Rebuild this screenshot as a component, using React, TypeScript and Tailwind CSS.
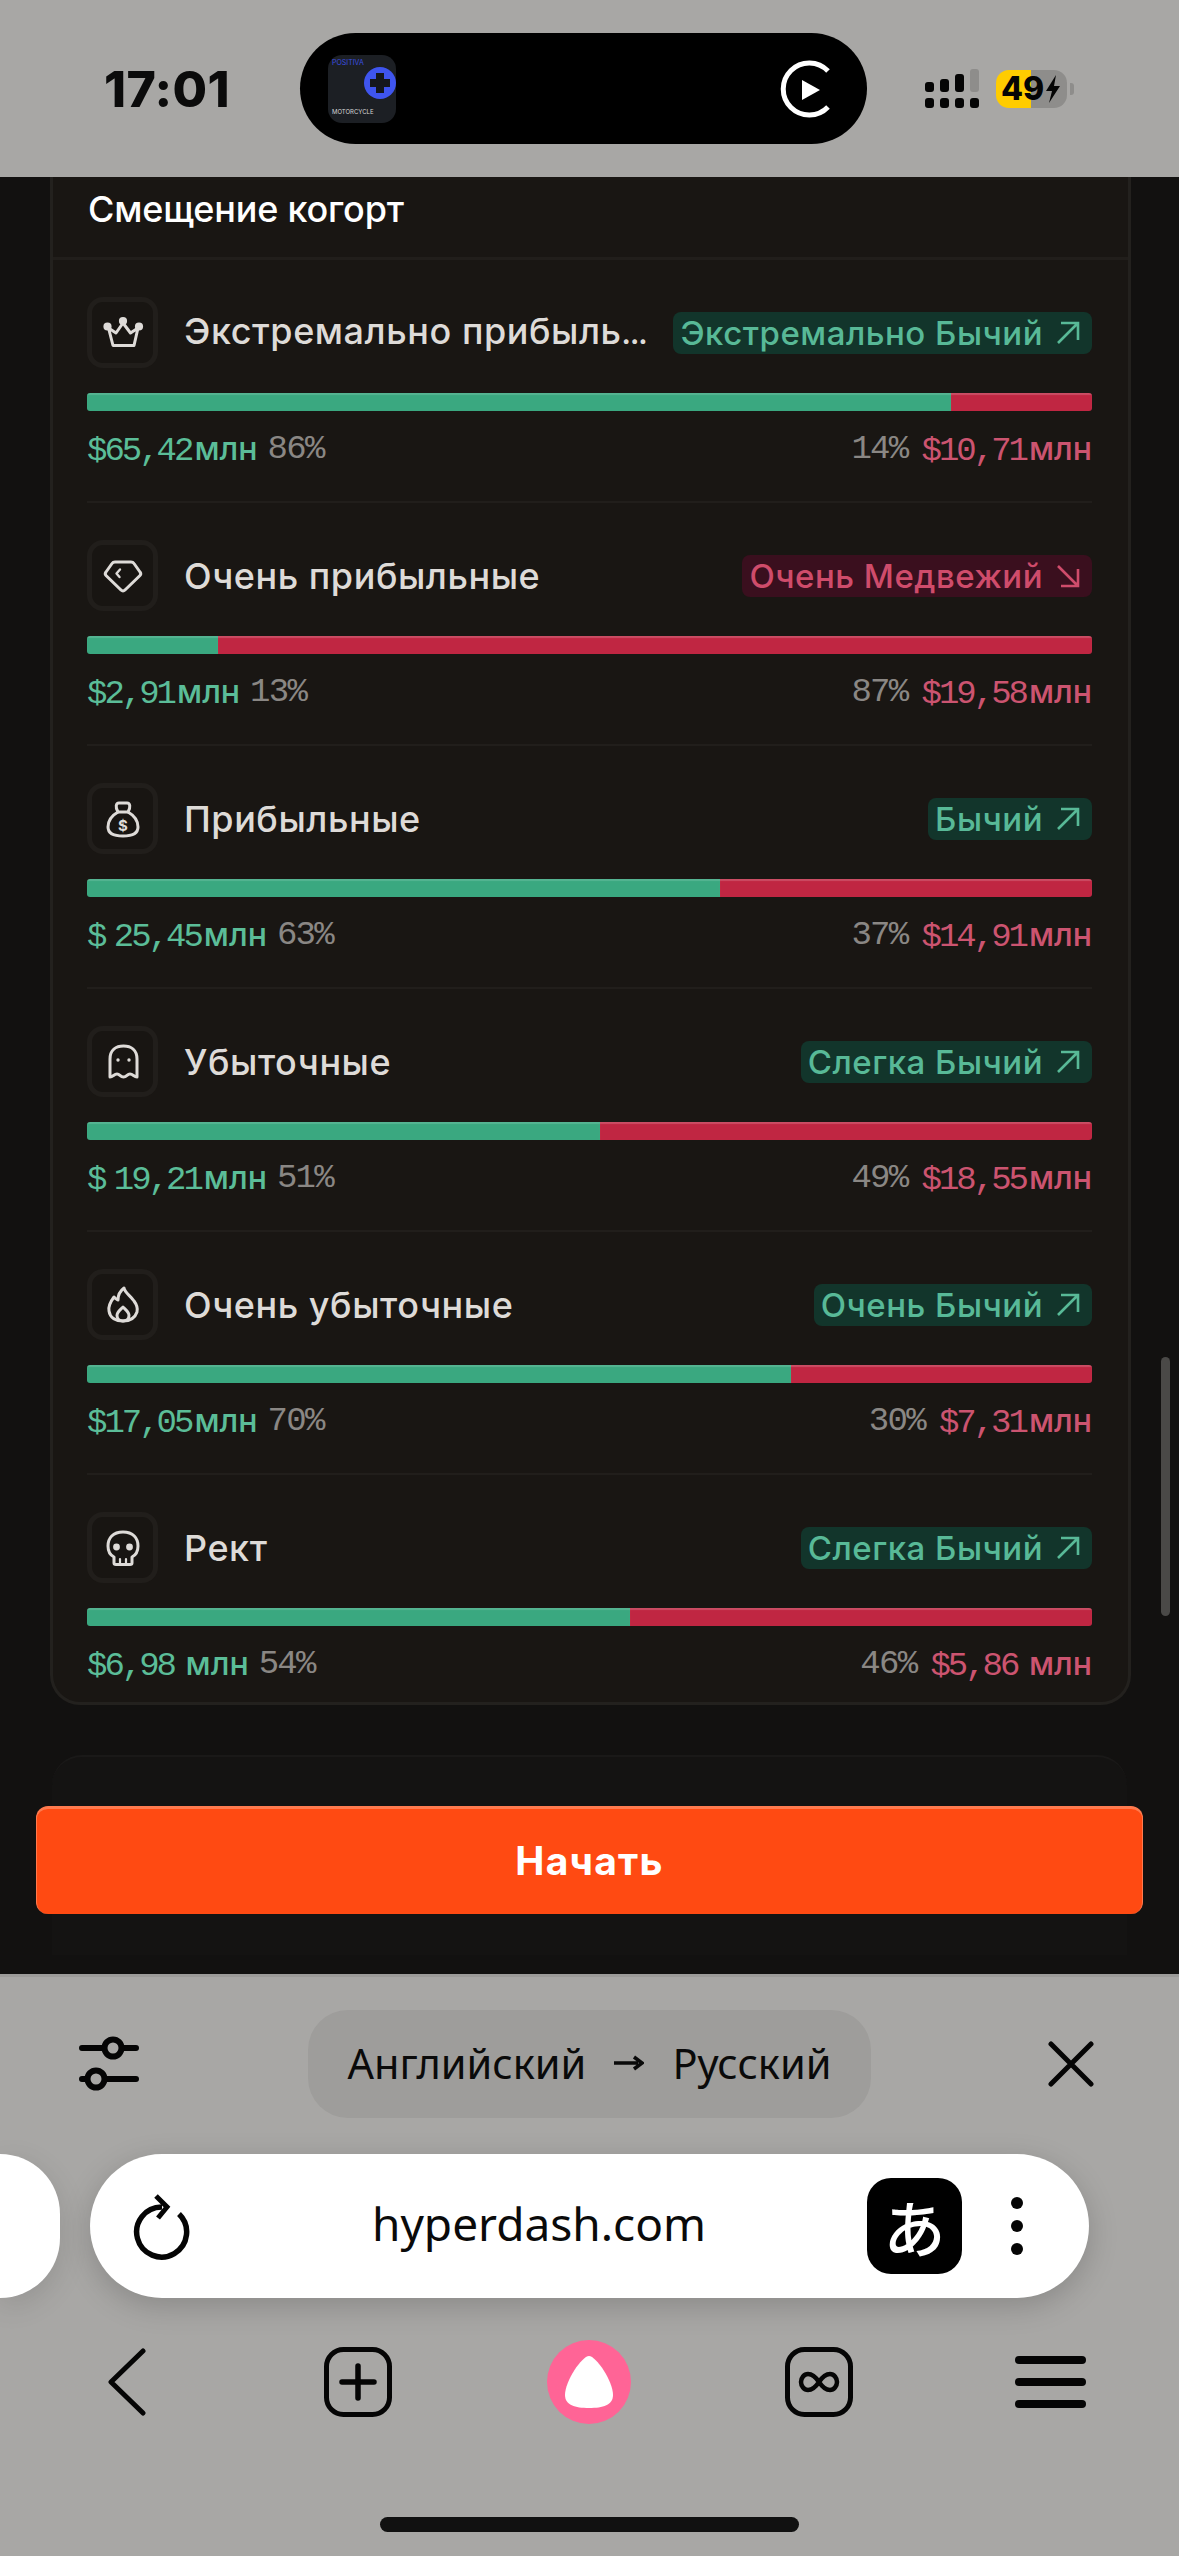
import React from "react";

type Row = {
  name: string;
  cut?: boolean;
  icon: React.ReactNode;
  badge: string;
  bull: boolean;
  buy: string;
  buyPct: number;
  sell: string;
  unit?: string;
};

const Crown = () => (
  <>
    <path d="M12 34.5 L7.5 17 L15 22 L22 12 L29.5 22 L37 17 L33 34.5 Z" />
    <circle cx="6.5" cy="15.5" r="2.6" fill="#dedbd8" />
    <circle cx="22" cy="10" r="2.6" fill="#dedbd8" />
    <circle cx="38" cy="15.5" r="2.6" fill="#dedbd8" />
  </>
);

const Diamond = () => (
  <>
    <path d="M14 8 H30 Q32 8 33 9.500 L39 18 Q40.500 20 39 21.500 L24 36 Q22 38 20 36 L5 21.500 Q3.500 20 5 18 L11 9.500 Q12 8 14 8 Z" />
    <path d="M19 15.500 L15.500 19.500 L18.500 23" strokeWidth="2.4" />
  </>
);

const Bag = () => (
  <>
    <path d="M17 15 C14 10 15 6 18 6 H26 C29 6 30 10 27 15 Z" />
    <path d="M17 15 C10 19 7 25 7 30 C7 36 12 39 22 39 C32 39 37 36 37 30 C37 25 34 19 27 15" />
    <text x="22" y="34" textAnchor="middle" fontSize="15" fontWeight="700" fill="#dedbd8" stroke="none" fontFamily="Inter, sans-serif">
      $
    </text>
  </>
);

const Ghost = () => (
  <>
    <path d="M9 37 V19 C9 10 15 6 22.5 6 C30 6 36 10 36 19 V37 C33 37 32 34 29 34 C26 34 26 37 22.5 37 C19 37 19 34 16 34 C13 34 12 37 9 37 Z" />
    <circle cx="17" cy="20" r="1.7" fill="#dedbd8" stroke="none" />
    <circle cx="28" cy="20" r="1.7" fill="#dedbd8" stroke="none" />
  </>
);

const Flame = () => (
  <>
    <path d="M23 5 C24 10 29 12 33 18 C36 22 37 25 36 29 C34 35 29 38 22 38 C15 38 9 35 8 28 C7 23 10 18 13 14 C15 16 16 17 17 17 C17 12 19 8 23 5 Z" />
    <path d="M22 24 C25 27 28 29 28 32.500 C28 36 25 38 22 38 C19 38 16 36 16 32.500 C16 29 19 27 22 24 Z" />
  </>
);

const Skull = () => (
  <>
    <path d="M22 6 C12 6 7 12 7 20 C7 26 9 29 13 31 V37 C13 38 14 38.500 15 38.500 H29 C30 38.500 31 38 31 37 V31 C35 29 37 26 37 20 C37 12 32 6 22 6 Z" />
    <path d="M19 33 V38 M25 33 V38" strokeWidth="2.2" />
    <circle cx="15.500" cy="21" r="3.400" fill="#dedbd8" stroke="none" />
    <circle cx="28.500" cy="21" r="3.400" fill="#dedbd8" stroke="none" />
  </>
);

const rows: Row[] = [
  { name: "Экстремально прибыль", cut: true, icon: <Crown />, badge: "Экстремально Бычий", bull: true, buy: "$65,42", buyPct: 86, sell: "$10,71" },
  { name: "Очень прибыльные", icon: <Diamond />, badge: "Очень Медвежий", bull: false, buy: "$2,91", buyPct: 13, sell: "$19,58" },
  { name: "Прибыльные", icon: <Bag />, badge: "Бычий", bull: true, buy: "$ 25,45", buyPct: 63, sell: "$14,91" },
  { name: "Убыточные", icon: <Ghost />, badge: "Слегка Бычий", bull: true, buy: "$ 19,21", buyPct: 51, sell: "$18,55" },
  { name: "Очень убыточные", icon: <Flame />, badge: "Очень Бычий", bull: true, buy: "$17,05", buyPct: 70, sell: "$7,31" },
  { name: "Рект", icon: <Skull />, badge: "Слегка Бычий", bull: true, buy: "$6,98", buyPct: 54, sell: "$5,86", unit: " млн" },
];

const Money = ({ value, unit }: { value: string; unit: string }) => (
  <span className="whitespace-pre">
    <span className="font-['Liberation_Mono',monospace] text-[34px] tracking-[-3px] [word-spacing:-8px]">{value}</span>
    <span className="ml-[3px] font-medium">{unit}</span>
  </span>
);

const Pct = ({ value }: { value: number }) => (
  <span className="text-[#8a8784] font-['Liberation_Mono',monospace] text-[34px] tracking-[-1.7px]">{value}%</span>
);

const CohortRow = ({ row, last }: { row: Row; last: boolean }) => (
  <div className={`ml-[37px] mr-[39px] pt-[37px] ${last ? "pb-[15px]" : "pb-[29px] border-b-2 border-[#211e1b]"}`}>
    <div className="flex items-center h-[71px]">
      <div className="w-[71px] h-[71px] shrink-0 flex items-center justify-center rounded-[16px] bg-[#181512] border-[5px] border-[#211e1b]">
        <svg width="44" height="44" viewBox="0 0 44 44" fill="none" stroke="#dedbd8" strokeWidth="3" strokeLinejoin="round" strokeLinecap="round">
          {row.icon}
        </svg>
      </div>
      <div className="flex-1 min-w-0 ml-[26px] mr-[20px] whitespace-nowrap text-[36px] leading-[44px] tracking-[0.55px] font-medium text-[#dedbd8]">
        {row.name}
        {row.cut && <span className="text-[28px] tracking-[-1px] font-bold">...</span>}
      </div>
      <div
        className={`shrink-0 flex items-center h-[42px] pt-[3px] pl-[7px] pr-[12px] rounded-[8px] text-[33px] tracking-[0.5px] font-medium ${
          row.bull ? "bg-[#12352b] text-[#58b997]" : "bg-[#3a0f1e] text-[#cf4c6b]"
        }`}
      >
        <span>{row.badge}</span>
        <svg className="ml-[13px] -mt-[3px]" width="24" height="24" viewBox="0 0 24 24" fill="none" stroke="currentColor" strokeWidth="2.6">
          {row.bull ? <path d="M2 22 L22 2 M5 2 H22 V19" /> : <path d="M2 2 L22 22 M5 22 H22 V5" />}
        </svg>
      </div>
    </div>
    <div className="flex h-[18px] mt-[25px] rounded-[3px] overflow-hidden">
      <div className="bg-[#3aa880] shadow-[inset_0_2px_1px_rgba(255,255,255,0.14)]" style={{ width: `${row.buyPct}%` }} />
      <div className="flex-1 bg-[#c02642] shadow-[inset_0_2px_1px_rgba(255,255,255,0.18)]" />
    </div>
    <div className="flex justify-between items-center h-[44px] mt-[17px] text-[32px] leading-[44px]">
      <div className="flex gap-[10px]">
        <span className="text-[#5bbd98]">
          <Money value={row.buy} unit={row.unit ?? "млн"} />
        </span>
        <Pct value={row.buyPct} />
      </div>
      <div className="flex gap-[14px]">
        <Pct value={100 - row.buyPct} />
        <span className="text-[#cc5470]">
          <Money value={row.sell} unit={row.unit ?? "млн"} />
        </span>
      </div>
    </div>
  </div>
);

const StatusBar = () => (
  <div className="h-[177px] shrink-0 flex items-center pl-[104px] bg-[#a8a7a5]">
    <div className="w-[196px] text-[50px] leading-none font-extrabold text-[#0b0b0b] tracking-[0.4px]">17:01</div>
    <div className="w-[567px] h-[111px] rounded-[56px] bg-black flex items-center justify-between pl-[28px] pr-[33px]">
      <div className="relative w-[68px] h-[68px] rounded-[14px] bg-[#1c1f24] overflow-hidden">
        <span className="absolute left-[4px] top-[4px] text-[7px] leading-none text-[#3b4fe0]">POSITIVA</span>
        <span className="absolute left-[4px] top-[54px] text-[6px] leading-none text-[#d5d5d5]">MOTORCYCLE</span>
        <svg className="absolute left-[36px] top-[12px]" width="32" height="32" viewBox="0 0 32 32">
          <circle cx="16" cy="16" r="16" fill="#3f55ee" />
          <path d="M12 6 H20 V12 H26 V20 H20 V26 H12 V20 H6 V12 H12 Z" fill="#15171c" />
        </svg>
      </div>
      <svg width="56" height="60" viewBox="0 0 56 60">
        <path d="M50 12 A26 26 0 1 0 50 48" fill="none" stroke="#fff" strokeWidth="5" />
        <path d="M24 21 L42 31 L24 41 Z" fill="#fff" />
      </svg>
    </div>
    <svg className="ml-[58px]" width="54" height="40" viewBox="0 0 54 40">
      <rect x="0" y="13" width="9" height="10" rx="3" fill="#050505" />
      <rect x="15" y="10" width="9" height="13" rx="3" fill="#050505" />
      <rect x="30" y="5" width="9" height="18" rx="3" fill="#050505" />
      <rect x="45" y="0" width="9" height="23" rx="3" fill="#8e8d8b" />
      <rect x="0" y="29" width="9" height="10" rx="3" fill="#050505" />
      <rect x="15" y="29" width="9" height="10" rx="3" fill="#050505" />
      <rect x="30" y="29" width="9" height="10" rx="3" fill="#050505" />
      <rect x="45" y="29" width="9" height="10" rx="3" fill="#050505" />
    </svg>
    <div className="ml-[17px] w-[71px] h-[38px] rounded-[13px] flex items-center pl-[5px] bg-[linear-gradient(90deg,#ffcc00_49%,#8e8d8b_49%)]">
      <span className="text-[32px] leading-none font-extrabold text-[#050505]">49</span>
      <svg width="16" height="28" viewBox="0 0 16 28" className="ml-[1px]">
        <path d="M11 0 L1 16 H7 L4 28 L15 11 H9 Z" fill="#050505" />
      </svg>
    </div>
    <div className="ml-[3px] w-[4px] h-[12px] rounded-r-[3px] bg-[#8e8d8b]" />
  </div>
);

const TranslateBar = () => (
  <div className="flex items-center justify-between h-[108px] pl-[79px] pr-[85px]">
    <svg width="60" height="56" viewBox="0 0 60 56" fill="none" stroke="#050505" strokeWidth="6" strokeLinecap="round">
      <path d="M3 12 H25 M43 12 H57 M3 43 H8 M26 43 H57" />
      <circle cx="34" cy="12" r="8.500" />
      <circle cx="17" cy="43" r="8.500" />
    </svg>
    <div className="w-[563px] h-[108px] mr-[8px] pb-[2px] rounded-[40px] bg-[#9e9d9b] flex items-center justify-center text-[41.5px] text-[#0a0a0a] font-['Noto_Sans',sans-serif]">
      <span>Английский</span>
      <svg className="mx-[28px]" width="30" height="16" viewBox="0 0 30 16">
        <path d="M0 8 H24 M20 2 L28 8 L20 14" fill="none" stroke="#0a0a0a" strokeWidth="3.500" />
      </svg>
      <span>Русский</span>
    </div>
    <svg width="46" height="46" viewBox="0 0 46 46" fill="none" stroke="#050505" strokeWidth="5" strokeLinecap="round">
      <path d="M3 3 L43 43 M43 3 L3 43" />
    </svg>
  </div>
);

const AddressBar = () => (
  <div className="flex gap-[30px] h-[144px] mt-[36px]">
    <div className="w-[60px] rounded-r-[72px] bg-white shadow-[0_8px_30px_rgba(0,0,0,0.12)]" />
    <div className="w-[999px] rounded-[72px] bg-white shadow-[0_8px_30px_rgba(0,0,0,0.18)] flex items-center pl-[41px] pr-[66px]">
      <svg className="shrink-0" width="60" height="68" viewBox="0 0 60 68" fill="none" stroke="#050505" strokeWidth="5.500">
        <path d="M31 15 A25 25 0 1 0 48 22" />
        <path d="M25 4 L36 15 L27 26" strokeWidth="5" />
      </svg>
      <div className="flex-1 pl-[20px] pb-[5px] text-center text-[46px] text-[#0a0a0a] font-['Noto_Sans',sans-serif]">hyperdash.com</div>
      <div className="w-[95px] h-[96px] shrink-0 rounded-[24px] bg-black flex items-center justify-center text-[62px] leading-none font-medium text-white font-['Noto_Sans_CJK_JP',sans-serif]">あ</div>
      <div className="ml-[49px] flex flex-col gap-[11px] shrink-0">
        <div className="w-[12px] h-[12px] rounded-full bg-[#050505]" />
        <div className="w-[12px] h-[12px] rounded-full bg-[#050505]" />
        <div className="w-[12px] h-[12px] rounded-full bg-[#050505]" />
      </div>
    </div>
  </div>
);

const NavBar = () => (
  <div className="flex items-center justify-between h-[84px] mt-[42px] pl-[77px] pr-[79px]">
    <div className="w-[100px] flex justify-center">
      <svg width="38" height="68" viewBox="0 0 38 68" fill="none" stroke="#050505" strokeWidth="5" strokeLinecap="round" strokeLinejoin="round">
        <path d="M35 3 L3 34 L35 65" />
      </svg>
    </div>
    <div className="w-[100px] flex justify-center">
      <svg width="68" height="70" viewBox="0 0 68 70" fill="none" stroke="#050505" strokeWidth="5">
        <rect x="2.500" y="2.500" width="63" height="65" rx="17" />
        <path d="M18 35 H50 M34 19 V51" strokeWidth="5.500" strokeLinecap="round" />
      </svg>
    </div>
    <div className="w-[100px] flex justify-center">
      <div className="w-[84px] h-[84px] rounded-full bg-[#ff6496] flex items-center justify-center">
        <svg width="48" height="52" viewBox="0 0 48 52">
          <path d="M24 0 C31 0 48 25 48 39 C48 49 38 52 24 52 C10 52 0 49 0 39 C0 25 17 0 24 0 Z" fill="#fff" />
        </svg>
      </div>
    </div>
    <div className="w-[100px] flex justify-center">
      <svg width="68" height="70" viewBox="0 0 68 70" fill="none" stroke="#050505" strokeWidth="5">
        <rect x="2.500" y="2.500" width="63" height="65" rx="17" />
        <path d="M34 35 C30 29 27 27 23 27 C19 27 16 31 16 35 C16 39 19 43 23 43 C27 43 30 41 34 35 C38 29 41 27 45 27 C49 27 52 31 52 35 C52 39 49 43 45 43 C41 43 38 41 34 35 Z" strokeWidth="4.500" />
      </svg>
    </div>
    <div className="w-[100px] flex flex-col items-center gap-[14px]">
      <div className="w-[71px] h-[8px] rounded-full bg-[#050505]" />
      <div className="w-[71px] h-[8px] rounded-full bg-[#050505]" />
      <div className="w-[71px] h-[8px] rounded-full bg-[#050505]" />
    </div>
  </div>
);

export default function App() {
  return (
    <div className="w-[1179px] h-[2556px] overflow-hidden flex flex-col bg-[#a8a7a5] font-['Inter',sans-serif]">
      <StatusBar />

      <main className="relative h-[1797px] shrink-0 overflow-hidden bg-[#121110]">
        <div className="mx-[50px] w-[1081px] rounded-b-[30px] bg-[#191613] border-x-[3px] border-b-[3px] border-[#23211e]">
          <div className="h-[83px] pl-[35px] pb-[16px] flex items-center border-b-[3px] border-[#211e1b]">
            <h2 className="text-[36px] font-medium text-white tracking-[-0.2px]">Смещение когорт</h2>
          </div>
          <div className="-mx-[3px]">
            {rows.map((row, i) => (
              <CohortRow key={row.name} row={row} last={i === rows.length - 1} />
            ))}
          </div>
        </div>

        <div className="mx-[52px] mt-[50px] h-[200px] rounded-t-[30px] bg-[#141312] border-t-[2px] border-[#1a1918]" />

        <button className="absolute left-[36px] top-[1629px] w-[1107px] h-[108px] rounded-[12px] bg-[#ff4a12] border-t-[3px] border-x-[1px] border-[#ff7a4e] text-[39px] font-bold tracking-[1.2px] text-white">
          Начать
        </button>

        <div className="absolute left-[1161px] top-[1180px] w-[9px] h-[259px] rounded-full bg-[#4a4947]" />
      </main>

      <div className="flex-1 pt-[33px] bg-[#a8a7a5] border-t-[3px] border-[#9c9b99]">
        <TranslateBar />
        <AddressBar />
        <NavBar />
        <div className="mx-auto mt-[93px] w-[419px] h-[15px] rounded-full bg-[#111]" />
      </div>
    </div>
  );
}
